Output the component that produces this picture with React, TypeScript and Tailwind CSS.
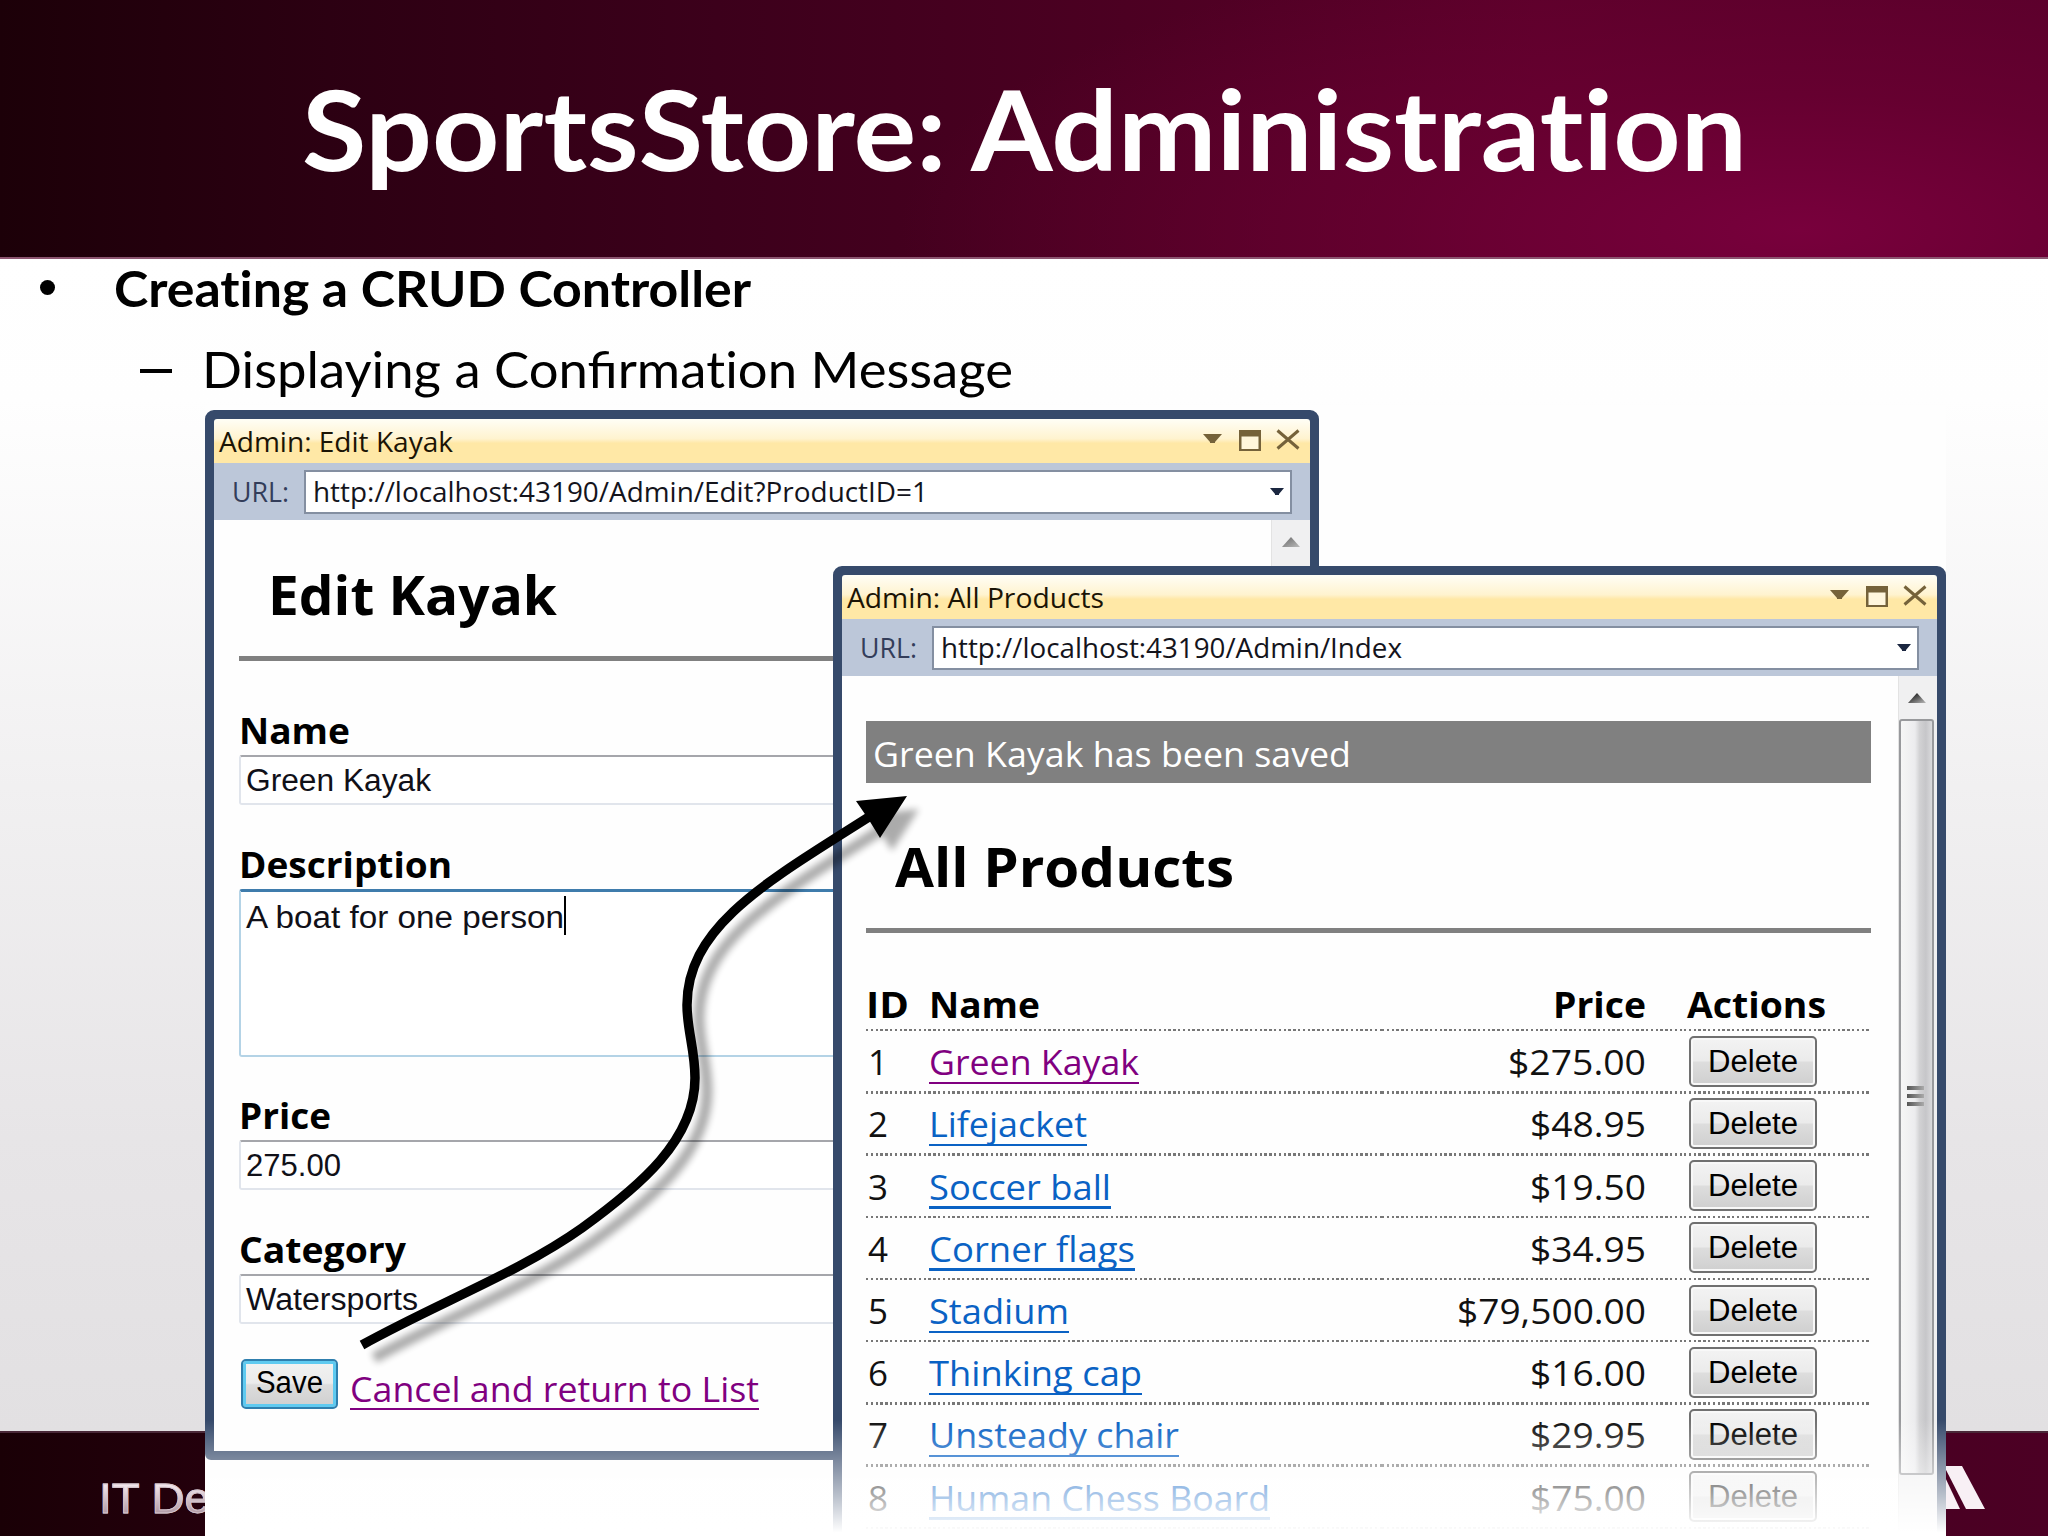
import React, { useLayoutEffect, useRef, useState } from 'react';

interface FitProps {
  w: number;
  className?: string;
  children: React.ReactNode;
}

// Single line of text stretched horizontally to a fixed width.
const Fit: React.FC<FitProps> = ({ w, className = '', children }) => {
  const ref = useRef<HTMLSpanElement>(null);
  const [scale, setScale] = useState(1);

  useLayoutEffect(() => {
    if (ref.current && ref.current.offsetWidth > 0) {
      setScale(w / ref.current.getBoundingClientRect().width);
    }
  }, [w]);

  return (
    <span className="block shrink-0" style={{ width: w }}>
      <span
        ref={ref}
        className={`inline-block origin-left whitespace-nowrap ${className}`}
        style={{ transform: `translateY(1px) scaleX(${scale})` }}
      >
        {children}
      </span>
    </span>
  );
};

interface WindowProps {
  title: string;
  titleWidth: number;
  url: string;
  urlWidth: number;
  className: string;
  children: React.ReactNode;
}

const BrowserWindow: React.FC<WindowProps> = ({ title, titleWidth, url, urlWidth, className, children }) => (
  <section className={`flex flex-col rounded-t-[9px] border-[9px] border-[#364a6b] bg-[#364a6b] ${className}`}>
    <div className="flex h-[44px] shrink-0 items-center rounded-t-[3px] bg-[linear-gradient(#fffef6_0%,#fff3cf_45%,#ffe8a6_55%,#ffe8a6_100%)] pl-[5px] text-[27px] leading-[44px] text-[#1b1405]">
      <Fit w={titleWidth}>{title}</Fit>
      <svg className="ml-auto mr-[9px] shrink-0" width="98" height="24" viewBox="0 0 98 24" fill="none">
        <path d="M0 5h19l-7 8v1h-5v-1z" fill="#75623a" />
        <path d="M36 1h22v21H36z" fill="#75623a" />
        <path d="M38.500 7.500h17v12.500h-17z" fill="#fff6dc" />
        <path d="M74.500 1.500l21 18M95.500 1.500l-21 18" stroke="#75623a" strokeWidth="3" />
      </svg>
    </div>
    <div className="flex h-[57px] shrink-0 items-center bg-[#bcc7d9] pl-[18px] pr-[18px] text-[27px]">
      <Fit w={57} className="text-[#333d5a]">URL:</Fit>
      <div className="ml-[15px] flex h-[44px] flex-1 items-center border-2 border-[#848fa1] bg-white pl-[7px] pr-[6px] text-[#14141c]">
        <Fit w={urlWidth}>{url}</Fit>
        <svg className="ml-auto" width="14" height="8" viewBox="0 0 14 8">
          <path d="M0 0h14l-5 6v1H5V6z" fill="#1b2740" />
        </svg>
      </div>
    </div>
    <div className="flex min-h-0 flex-1 overflow-hidden bg-[#fefefe]">{children}</div>
  </section>
);

const ScrollUp: React.FC<{ dim?: boolean }> = ({ dim }) => (
  <div className="flex h-[43px] w-full shrink-0 justify-center pt-[17px]">
    <svg width="18" height="10" viewBox="0 0 18 10">
      <defs>
        <linearGradient id={dim ? 'upDim' : 'up'} x1="0" x2="1" y1="0" y2="1">
          <stop offset="0.2" stopColor={dim ? '#777' : '#222'} />
          <stop offset="1" stopColor="#bbb" />
        </linearGradient>
      </defs>
      <path d="M9 0l9 10H0z" fill={`url(#${dim ? 'upDim' : 'up'})`} />
    </svg>
  </div>
);

const FieldLabel: React.FC<{ w: number; children: React.ReactNode }> = ({ w, children }) => (
  <div className="h-[50px] text-[35px] leading-[50px] font-bold">
    <Fit w={w}>{children}</Fit>
  </div>
);

const TextField: React.FC<{ w: number; value: string }> = ({ w, value }) => (
  <div className="flex h-[50px] items-center rounded-[3px] border-2 border-[#e1e5ec] border-t-[#a5a6ab] bg-white pl-[5px] font-['Liberation_Sans',sans-serif] text-[31px] text-[#101018]">
    <Fit w={w}>{value}</Fit>
  </div>
);

const EditKayak: React.FC = () => (
  <>
    <div className="flex min-w-0 flex-1 flex-col pr-[25px] pl-[25px] text-black">
      <h1 className="h-[136px] shrink-0 pt-[10px] pl-[29px] text-[54px] leading-[126px] font-bold">
        <Fit w={289}>Edit Kayak</Fit>
      </h1>
      <div className="mb-[44px] h-[5px] shrink-0 bg-[#808080]" />
      <FieldLabel w={111}>Name</FieldLabel>
      <TextField w={185} value="Green Kayak" />
      <div className="h-[34px]" />
      <FieldLabel w={213}>Description</FieldLabel>
      <div className="flex h-[168px] rounded-[3px] border-2 border-[#b4d3e6] border-t-[3px] border-t-[#3f7cac] bg-white pt-1 pl-[5px] font-['Liberation_Sans',sans-serif] text-[31px] leading-[42px] text-[#101018]">
        <Fit w={318}>A boat for one person</Fit>
        <span className="h-[39px] w-[2px] bg-black" />
      </div>
      <div className="h-[33px]" />
      <FieldLabel w={92}>Price</FieldLabel>
      <TextField w={95} value="275.00" />
      <div className="h-[34px]" />
      <FieldLabel w={167}>Category</FieldLabel>
      <TextField w={172} value="Watersports" />
      <div className="mt-[35px] flex pl-[2px]">
        <button className="flex h-[50px] w-[97px] justify-center rounded-[5px] border-2 border-[#2f7fae] bg-[linear-gradient(#f2f2f2_0%,#ebebeb_48%,#dcdcdc_52%,#cfcfcf_100%)] font-['Liberation_Sans',sans-serif] text-[31px] leading-[41px] text-black shadow-[inset_0_0_0_3px_#5fcaf0]">
          <Fit w={67}>Save</Fit>
        </button>
        <div className="ml-[12px] h-[51px] border-b-[2.5px] border-[#800080] text-[35px] leading-[58px] text-[#800080]">
          <Fit w={409}>Cancel and return to List</Fit>
        </div>
      </div>
    </div>
    <div className="w-[39px] border-l border-[#e3e3e3] bg-[#f0f0f1]">
      <ScrollUp dim />
    </div>
  </>
);

interface Product {
  id: number;
  name: string;
  nameWidth: number;
  price: string;
  priceWidth: number;
  visited?: boolean;
}

const products: Product[] = [
  { id: 1, name: 'Green Kayak', nameWidth: 210, price: '$275.00', priceWidth: 138, visited: true },
  { id: 2, name: 'Lifejacket', nameWidth: 158, price: '$48.95', priceWidth: 116 },
  { id: 3, name: 'Soccer ball', nameWidth: 182, price: '$19.50', priceWidth: 116 },
  { id: 4, name: 'Corner flags', nameWidth: 206, price: '$34.95', priceWidth: 116 },
  { id: 5, name: 'Stadium', nameWidth: 140, price: '$79,500.00', priceWidth: 189 },
  { id: 6, name: 'Thinking cap', nameWidth: 213, price: '$16.00', priceWidth: 116 },
  { id: 7, name: 'Unsteady chair', nameWidth: 250, price: '$29.95', priceWidth: 116 },
  { id: 8, name: 'Human Chess Board', nameWidth: 341, price: '$75.00', priceWidth: 116 },
];

const dots = 'h-[2.4px] bg-[repeating-linear-gradient(to_right,#777_0,#777_2.4px,transparent_2.4px,transparent_4.8px)]';

const DottedLine: React.FC = () => (
  <div className="flex shrink-0">
    <span className={`w-[516px] ${dots}`} />
    <span className={`w-[302px] ${dots}`} />
    <span className={`w-[187px] ${dots}`} />
  </div>
);

const ProductRow: React.FC<{ product: Product }> = ({ product }) => (
  <>
    <div className="flex h-[59.8px] shrink-0 items-center text-[35px] leading-[50px] text-[#111]">
      <div className="w-[63px] pl-[2px]">
        <Fit w={20}>{product.id}</Fit>
      </div>
      <div className="w-[453px]">
        <div className={`relative w-fit ${product.visited ? 'text-[#800080]' : 'text-[#0a62c4]'}`}>
          <Fit w={product.nameWidth}>{product.name}</Fit>
          <span className="absolute bottom-[2px] left-0 h-[2.5px] w-full bg-current" />
        </div>
      </div>
      <div className="flex w-[264px] justify-end">
        <Fit w={product.priceWidth}>{product.price}</Fit>
      </div>
      <button className="ml-[43px] flex h-[51px] w-[128px] justify-center rounded-[5px] border-2 border-[#707070] bg-[linear-gradient(#f3f3f3_0%,#ebebeb_48%,#dddddd_52%,#cfcfcf_100%)] font-['Liberation_Sans',sans-serif] text-[31px] leading-[45px] text-black shadow-[inset_0_0_0_2px_#f8f8f8]">
        <Fit w={90}>Delete</Fit>
      </button>
    </div>
    <DottedLine />
  </>
);

const AllProducts: React.FC = () => (
  <>
    <div className="flex w-[1029px] shrink-0 flex-col pt-[45px] pl-[24px] text-black">
      <div className="h-[62px] shrink-0 bg-[#808080] pl-[7px] text-[35px] leading-[64px] text-white">
        <Fit w={478}>Green Kayak has been saved</Fit>
      </div>
      <h1 className="h-[145px] shrink-0 pt-[20px] pl-[29px] text-[54px] leading-[125px] font-bold">
        <Fit w={339}>All Products</Fit>
      </h1>
      <div className="h-[5px] shrink-0 bg-[#808080]" />
      <div className="mt-[46px] flex h-[50px] shrink-0 text-[35px] leading-[50px] font-bold">
        <div className="w-[63px]">
          <Fit w={43}>ID</Fit>
        </div>
        <div className="w-[453px]">
          <Fit w={111}>Name</Fit>
        </div>
        <div className="flex w-[264px] justify-end">
          <Fit w={93}>Price</Fit>
        </div>
        <div className="ml-[41px]">
          <Fit w={139}>Actions</Fit>
        </div>
      </div>
      <DottedLine />
      {products.map((product) => (
        <ProductRow key={product.id} product={product} />
      ))}
    </div>
    <div className="ml-auto flex w-[39px] flex-col border-l border-[#e3e3e3] bg-[#f0f0f1] pr-[2px]">
      <ScrollUp />
      <div className="flex h-[756px] w-[35px] shrink-0 items-center justify-center rounded-[3px] border-2 border-[#98999c] bg-[linear-gradient(to_right,#f6f6f6_0%,#ececee_45%,#d2d2d4_60%,#c6c6c9_80%,#dadadc_100%)]">
        <div className="flex flex-col gap-[4px] pr-[2px] pb-[3px]">
          <span className="h-[4px] w-[17px] bg-[linear-gradient(to_right,#555,#aaa)]" />
          <span className="h-[4px] w-[17px] bg-[linear-gradient(to_right,#555,#aaa)]" />
          <span className="h-[4px] w-[17px] bg-[linear-gradient(to_right,#555,#aaa)]" />
        </div>
      </div>
    </div>
  </>
);

const CurvedArrow: React.FC = () => {
  const curve =
    'M362 1345C440 1302 520 1272 582 1228C640 1186 695 1140 695 1078C695 1050 687 1030 687 1005C687 925 770 880 872 815';
  const head = 'M907 796L880 838L869 820L856 801z';

  return (
    <svg className="absolute top-0 left-0" width="2048" height="1536" viewBox="0 0 2048 1536" fill="none">
      <defs>
        <filter id="soft" x="-10%" y="-10%" width="120%" height="120%">
          <feGaussianBlur stdDeviation="3.5" />
        </filter>
      </defs>
      <g transform="translate(12 13)" filter="url(#soft)" opacity="0.32">
        <path d={curve} stroke="#000" strokeWidth="11" />
        <path d={head} fill="#000" />
      </g>
      <path d={curve} stroke="#000" strokeWidth="9.5" />
      <path d={head} fill="#000" />
    </svg>
  );
};

const App: React.FC = () => {
  return (
    <div className="relative flex h-[1536px] w-[2048px] flex-col overflow-hidden bg-white font-['Open_Sans','Noto_Sans',sans-serif]">
      <header className="flex h-[259px] shrink-0 justify-center border-b-2 border-[#8c5570] bg-[radial-gradient(ellipse_900px_300px_at_1800px_230px,#78003c_0%,rgba(110,0,52,0.6)_45%,transparent_100%),linear-gradient(to_right,#1c0008_0%,#2c0012_16%,#3c001b_35%,#4c0022_55%,#5c002a_75%,#58002a_100%)] font-['Lato',sans-serif] text-[112px] leading-[254px] font-bold text-white">
        <Fit w={1445} className="[font-variant-ligatures:none]">SportsStore: Administration</Fit>
      </header>

      <main className="flex-1 bg-[linear-gradient(#ffffff_0%,#fefefe_12%,#f1f0f1_45%,#e7e5e7_75%,#e2e0e2_100%)] font-['Lato',sans-serif] text-[50px] text-black">
        <div className="flex h-[56px] items-center pl-[40px] font-bold">
          <span className="h-[15px] w-[15px] rounded-full bg-black" />
          <div className="ml-[59px]">
            <Fit w={637} className="[font-variant-ligatures:none]">Creating a CRUD Controller</Fit>
          </div>
        </div>
        <div className="flex h-[106px] items-center pl-[140px]">
          <span className="mt-[5px] h-[4px] w-[32px] bg-black" />
          <div className="ml-[30px]">
            <Fit w={811}>
              Displaying a Confirma<span className="[font-variant-ligatures:none]">tion</span> Message
            </Fit>
          </div>
        </div>
      </main>

      <footer className="flex h-[105px] shrink-0 items-start border-t-2 border-[#4a2838] bg-[linear-gradient(to_right,#1a0006_0%,#24000c_10%,#3c001a_60%,#4c0024_100%)] pl-[99px]">
        <div className="mt-[42px] font-['Liberation_Sans',sans-serif] text-[43px] leading-[44px]">
          <Fit w={111} className="bg-[linear-gradient(#f4e8ee_20%,#b09aa5_85%)] bg-clip-text text-transparent [-webkit-text-stroke:0.8px_#d8c8d0]">
            IT De
          </Fit>
        </div>
        <svg className="mt-[33px] mr-[62px] ml-auto" width="60" height="44" viewBox="0 0 60 44">
          <path d="M18 0h18l23 43H40z" fill="#f8f0f5" />
          <path d="M18 9L34 43H10z" fill="#f8f0f5" />
        </svg>
      </footer>

      {/* overlapping windows */}
      <div className="absolute top-[406px] left-[205px] h-[1130px] w-[1741px] bg-[#fefefe]" />
      <BrowserWindow
        className="absolute top-[410px] left-[205px] h-[1050px] w-[1114px] rounded-b-[6px]"
        title="Admin: Edit Kayak"
        titleWidth={234}
        url="http://localhost:43190/Admin/Edit?ProductID=1"
        urlWidth={615}
      >
        <EditKayak />
      </BrowserWindow>
      <BrowserWindow
        className="absolute top-[566px] left-[833px] h-[990px] w-[1113px]"
        title="Admin: All Products"
        titleWidth={257}
        url="http://localhost:43190/Admin/Index"
        urlWidth={461}
      >
        <AllProducts />
      </BrowserWindow>
      <div className="absolute top-[1420px] left-[205px] h-[116px] w-[1741px] bg-[linear-gradient(to_bottom,rgba(255,255,255,0)_0%,rgba(255,255,255,0.3)_30%,rgba(255,255,255,0.66)_66%,#ffffff_97%)]" />

      <CurvedArrow />
    </div>
  );
};

export default App;
